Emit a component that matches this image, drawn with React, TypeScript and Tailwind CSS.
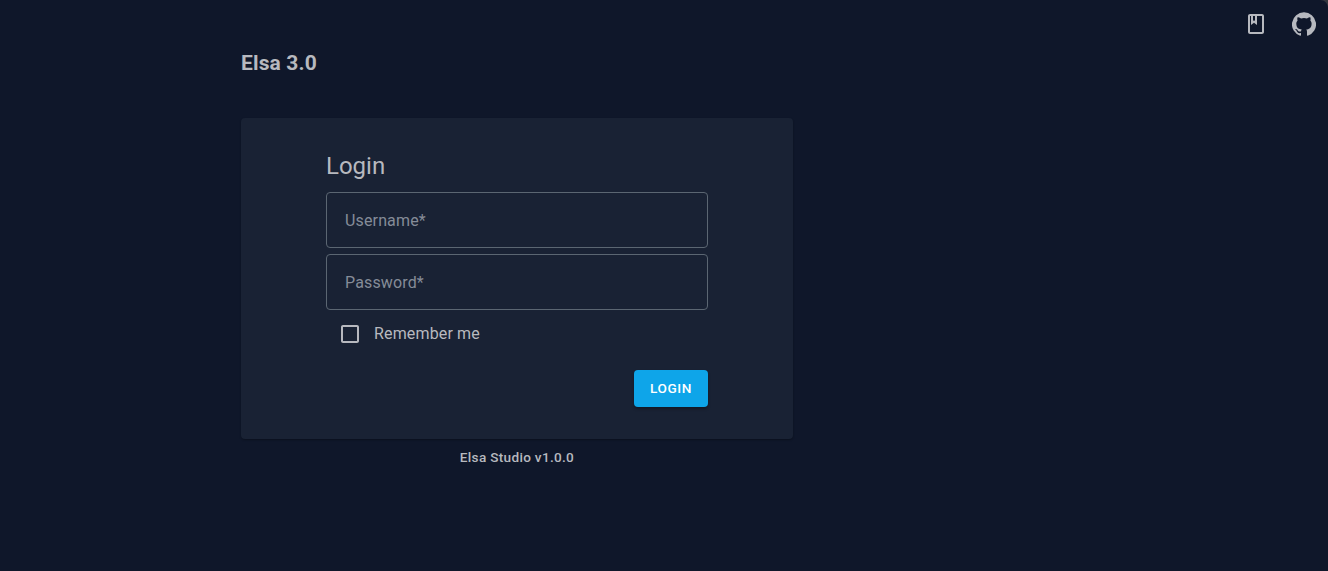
import React from "react";

function Field({ label, type }: { label: string; type: string }) {
  return (
    <input
      type={type}
      placeholder={label}
      aria-label={label}
      className="block h-14 w-full rounded border border-[#5b6672] bg-transparent px-[18px] text-base tracking-[0.15px] text-[#bcbec2] placeholder:text-[#858c98] outline-none"
    />
  );
}

export default function App() {
  return (
    <div className="relative h-screen w-full overflow-hidden bg-[#0f172a] text-[#b7b9bf] font-['Roboto',sans-serif]">
      <svg viewBox="0 0 8 8" className="absolute right-0 top-0 size-2" fill="#33373f">
        <path d="M0 0h8v8C8 3.5 4.5 0 0 0z" />
      </svg>
      <header className="flex h-12 items-center justify-end gap-6 pr-3">
        <svg viewBox="0 0 24 24" className="size-6" fill="currentColor">
          <path d="M18 2H6c-1.1 0-2 .9-2 2v16c0 1.1.9 2 2 2h12c1.1 0 2-.9 2-2V4c0-1.1-.9-2-2-2zM9 4h2v5l-1-.75L9 9V4zm9 16H6V4h1v9l3-2.25L13 13V4h5v16z" />
        </svg>
        <svg viewBox="0 0 24 24" className="size-6" fill="currentColor">
          <path d="M12 .3a12 12 0 0 0-3.8 23.4c.6.1.8-.3.8-.6v-2c-3.3.7-4-1.6-4-1.6-.6-1.4-1.4-1.8-1.4-1.8-1-.7.1-.7.1-.7 1.2 0 1.9 1.2 1.9 1.2 1 1.8 2.8 1.3 3.5 1 0-.8.4-1.3.7-1.6-2.7-.3-5.5-1.3-5.5-6 0-1.2.5-2.3 1.3-3.1-.2-.4-.6-1.6 0-3.2 0 0 1-.3 3.4 1.2a11.5 11.5 0 0 1 6 0c2.3-1.5 3.3-1.2 3.3-1.2.6 1.6.2 2.8 0 3.2.9.8 1.3 1.9 1.3 3.2 0 4.6-2.8 5.6-5.5 5.9.5.4.9 1 .9 2.2v3.3c0 .3.1.7.8.6A12 12 0 0 0 12 .3" />
        </svg>
      </header>
      <main className="ml-[241px] w-[552px]">
        <h1 className="h-[70px] text-[21px] font-bold leading-[30px] tracking-[0.15px]">Elsa 3.0</h1>
        <section className="h-[321px] rounded bg-[#192234] px-[85px] pt-8 shadow-[0_1px_2px_rgba(0,0,0,0.3)]">
          <h2 className="mb-[10px] text-2xl font-normal leading-8">Login</h2>
          <div className="flex flex-col gap-[6px]">
            <Field label="Username*" type="text" />
            <Field label="Password*" type="password" />
          </div>
          <label className="mt-3 flex h-6 items-center gap-3 pl-3 text-base tracking-[0.15px]">
            <svg viewBox="0 0 24 24" className="size-6" fill="currentColor">
              <path d="M19 5v14H5V5h14m0-2H5c-1.1 0-2 .9-2 2v14c0 1.1.9 2 2 2h14c1.1 0 2-.9 2-2V5c0-1.1-.9-2-2-2z" />
            </svg>
            Remember me
          </label>
          <div className="mt-6 flex justify-end">
            <button className="h-[37px] w-[74px] rounded bg-[#0ea5e9] pb-px text-[13.6px] font-medium tracking-[0.6px] text-white shadow-[0_2px_3px_rgba(0,0,0,0.3)]">LOGIN</button>
          </div>
        </section>
        <p className="mt-[7px] text-center text-[13.6px] font-medium leading-[22px] tracking-[0.3px]">Elsa Studio v1.0.0</p>
      </main>
    </div>
  );
}
